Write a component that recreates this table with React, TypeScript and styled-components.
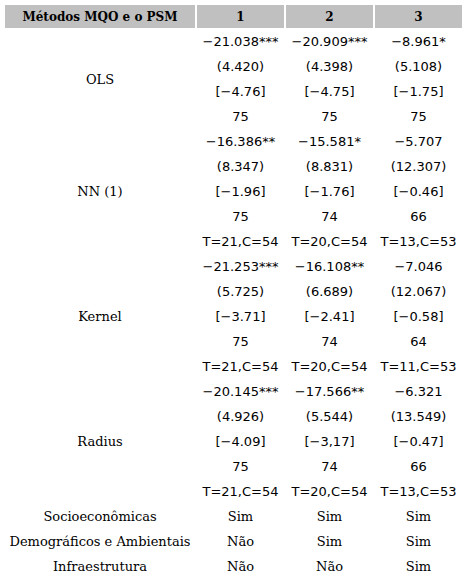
import styled, { createGlobalStyle } from 'styled-components'

const GlobalStyle = createGlobalStyle`
  body {
    margin: 0;
    background: #fff;
    color: #000;
  }
`

type Group = { label: string; rows: string[][] }

const groups: Group[] = [
	{
		label: 'OLS',
		rows: [
			['−21.038***', '−20.909***', '−8.961*'],
			['(4.420)', '(4.398)', '(5.108)'],
			['[−4.76]', '[−4.75]', '[−1.75]'],
			['75', '75', '75'],
		],
	},
	{
		label: 'NN (1)',
		rows: [
			['−16.386**', '−15.581*', '−5.707'],
			['(8.347)', '(8.831)', '(12.307)'],
			['[−1.96]', '[−1.76]', '[−0.46]'],
			['75', '74', '66'],
			['T=21,C=54', 'T=20,C=54', 'T=13,C=53'],
		],
	},
	{
		label: 'Kernel',
		rows: [
			['−21.253***', '−16.108**', '−7.046'],
			['(5.725)', '(6.689)', '(12.067)'],
			['[−3.71]', '[−2.41]', '[−0.58]'],
			['75', '74', '64'],
			['T=21,C=54', 'T=20,C=54', 'T=11,C=53'],
		],
	},
	{
		label: 'Radius',
		rows: [
			['−20.145***', '−17.566**', '−6.321'],
			['(4.926)', '(5.544)', '(13.549)'],
			['[−4.09]', '[−3,17]', '[−0.47]'],
			['75', '74', '66'],
			['T=21,C=54', 'T=20,C=54', 'T=13,C=53'],
		],
	},
]

const controls: [string, string[]][] = [
	['Socioeconômicas', ['Sim', 'Sim', 'Sim']],
	['Demográficos e Ambientais', ['Não', 'Sim', 'Sim']],
	['Infraestrutura', ['Não', 'Não', 'Sim']],
]

function App() {
	return (
		<>
			<GlobalStyle />
			<Table>
				<colgroup>
					<col style={{ width: 190 }} />
					<col style={{ width: 87 }} />
					<col style={{ width: 87 }} />
					<col style={{ width: 87 }} />
				</colgroup>
				<thead>
					<tr>
						<HeadCell>Métodos MQO e o PSM</HeadCell>
						<HeadCell>1</HeadCell>
						<HeadCell>2</HeadCell>
						<HeadCell>3</HeadCell>
					</tr>
				</thead>
				<tbody>
					{groups.map(group =>
						group.rows.map((row, i) => (
							<tr key={group.label + i}>
								{i === 0 && <LabelCell rowSpan={group.rows.length}>{group.label}</LabelCell>}
								{row.map((value, j) => (
									<ValueCell key={j} $numeric>{value}</ValueCell>
								))}
							</tr>
						))
					)}
					{controls.map(([label, values]) => (
						<tr key={label}>
							<LabelCell>{label}</LabelCell>
							{values.map((value, j) => (
								<ValueCell key={j}>{value}</ValueCell>
							))}
						</tr>
					))}
				</tbody>
			</Table>
		</>
	)
}

export default App

const Table = styled.table`
  margin: 3px 0 0 3px;
  table-layout: fixed;
  width: 461px;
  border-collapse: separate;
  border-spacing: 2px;
`

const HeadCell = styled.th`
  height: 23px;
  padding: 0;
  background: #c0c0c0;
  font-family: 'DejaVu Serif', serif;
  font-weight: bold;
  font-size: 12px;
  text-align: center;
  vertical-align: middle;
`

const LabelCell = styled.td`
  height: 23px;
  padding: 0;
  font-family: 'DejaVu Serif', serif;
  font-size: 13px;
  text-align: center;
  vertical-align: middle;
  white-space: nowrap;
`

const ValueCell = styled.td<{ $numeric?: boolean }>`
  height: 23px;
  padding: 0;
  font-family: ${p => (p.$numeric ? "'DejaVu Sans', sans-serif" : "'DejaVu Serif', serif")};
  font-size: 13px;
  text-align: center;
  vertical-align: middle;
  white-space: nowrap;
`
